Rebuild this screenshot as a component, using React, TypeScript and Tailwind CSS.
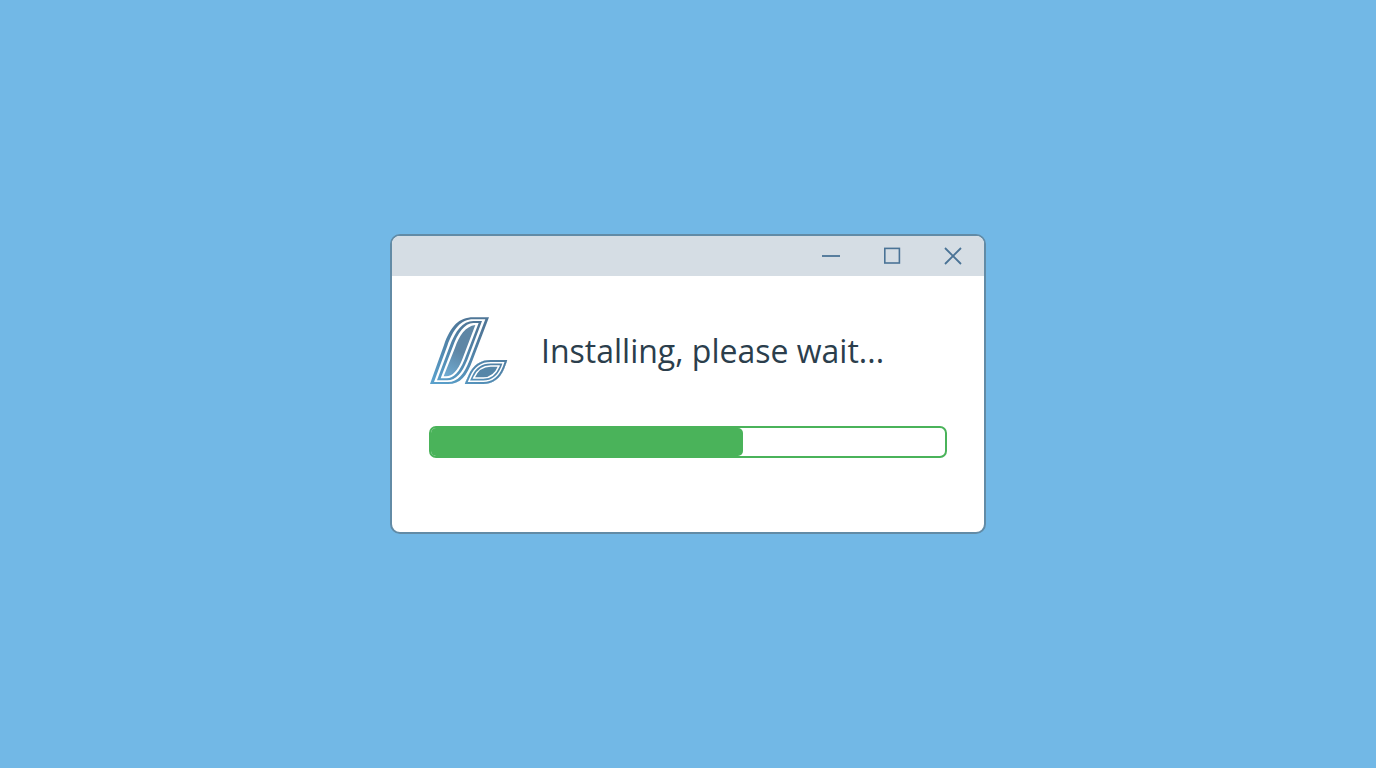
import React from "react";

const LEAF =
  "M134 237 L146 210 C160 178 184 165 212 165 L262 165 L253 190 C240 222 218 237 190 237 Z";

function Logo() {
  return (
    <svg viewBox="27 33 240 210" className="h-[70px] w-20 shrink-0" role="img" aria-label="Logo">
      <defs>
        <linearGradient id="ink" gradientUnits="userSpaceOnUse" x1="60" y1="240" x2="160" y2="60">
          <stop offset="0" stopColor="#5aa0cb" />
          <stop offset="0.45" stopColor="#5289b0" />
          <stop offset="1" stopColor="#4f7697" />
        </linearGradient>
        <linearGradient id="core" gradientUnits="userSpaceOnUse" x1="80" y1="215" x2="120" y2="140">
          <stop offset="0" stopColor="#70abd2" />
          <stop offset="1" stopColor="#5e86a5" />
        </linearGradient>
        <clipPath id="leaf">
          <path d={LEAF} />
        </clipPath>
      </defs>
      <path
        d="M30 237 L72 120 C92 64 116 37 160 37 H207 L158 165 C140 213 122 237 84 237 Z"
        fill="url(#ink)"
      />
      <path
        d="M42 231 L82 122 C100 72 122 43 160 43 H196 L149 165 C132 208 114 231 84 231 Z"
        fill="#fff"
      />
      <path
        d="M51 226 L89 124 C106 78 128 48 160 48 H186 L142 165 C126 204 108 226 82 226 Z"
        fill="url(#ink)"
      />
      <path
        d="M62 220 L98 126 C113 84 134 54 160 54 H176 L133 165 C118 200 102 220 80 220 Z"
        fill="#fff"
      />
      <path
        d="M71 214 L105 128 C118 92 136 64 166 60 L126 165 C113 196 98 214 78 214 Z"
        fill="url(#core)"
      />
      <g clipPath="url(#leaf)" fill="none">
        <path d={LEAF} fill="#5586a8" />
        <path d={LEAF} stroke="#fff" strokeWidth="40" />
        <path d={LEAF} stroke="url(#ink)" strokeWidth="31" />
        <path d={LEAF} stroke="#fff" strokeWidth="21" />
        <path d={LEAF} stroke="url(#ink)" strokeWidth="12" />
      </g>
    </svg>
  );
}

function TitleBar() {
  const button = "flex size-5 items-center justify-center text-[#4a7396]";
  return (
    <header className="flex h-10 items-center justify-end gap-[41px] bg-[#d5dde4] pr-[21px]">
      <button type="button" aria-label="Minimize" className={button}>
        <svg viewBox="0 0 20 20" className="size-5" fill="none" stroke="currentColor" strokeWidth="1.8">
          <path d="M1 10H19" />
        </svg>
      </button>
      <button type="button" aria-label="Maximize" className={button}>
        <svg viewBox="0 0 20 20" className="size-5" fill="none" stroke="currentColor" strokeWidth="1.6">
          <rect x="2.8" y="2.4" width="14.6" height="14.6" />
        </svg>
      </button>
      <button type="button" aria-label="Close" className={button}>
        <svg viewBox="0 0 20 20" className="size-5" fill="none" stroke="currentColor" strokeWidth="1.8">
          <path d="M2 2L18 18M18 2L2 18" />
        </svg>
      </button>
    </header>
  );
}

export default function App() {
  const progress = 60.7;
  return (
    <main className="flex min-h-screen items-center justify-center bg-[#72b8e6] p-6">
      <section className="w-full max-w-[596px] overflow-hidden rounded-[10px] border-2 border-[#628ba6] bg-white">
        <TitleBar />
        <div className="px-[37px] pt-10 pb-[74px]">
          <div className="flex items-center gap-8">
            <Logo />
            <h1 className="font-['Open_Sans','Noto_Sans',sans-serif] text-[32px] leading-[48px] text-[#2b3e4c]">
              Installing, please wait...
            </h1>
          </div>
          <div
            role="progressbar"
            aria-label="Installation progress"
            aria-valuemin={0}
            aria-valuemax={100}
            aria-valuenow={progress}
            className="mt-10 h-8 overflow-hidden rounded-[7px] border-2 border-[#4ab35a] bg-white"
          >
            <div className="h-full rounded-r-[5px] bg-[#4ab35a]" style={{ width: `${progress}%` }} />
          </div>
        </div>
      </section>
    </main>
  );
}
